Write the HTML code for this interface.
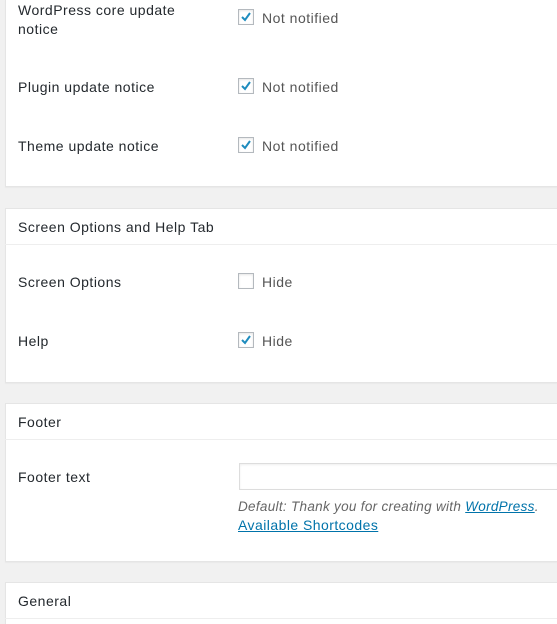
<!DOCTYPE html>
<html><head><style>
html,body{margin:0;width:557px;height:624px;overflow:hidden}
body{background:#f1f1f1;position:relative;font-family:"Liberation Sans",sans-serif;font-size:14px;color:#23282d;letter-spacing:.5px}
.p{position:absolute;left:5px;width:551px;background:#fff;border:1px solid #e5e5e5;border-right:none;box-shadow:0 1px 1px rgba(0,0,0,.04)}
.h{position:absolute;left:5px;width:552px;border-bottom:1px solid #eee}
.t{position:absolute;left:18px;line-height:19px;white-space:nowrap}
.cb{position:absolute;left:238px;width:14px;height:14px;border:1px solid #b4b9be;background:#fff;box-shadow:inset 0 1px 2px rgba(0,0,0,.1)}
.cb svg{position:absolute;left:1px;top:1px}
.l{position:absolute;left:262px;line-height:19px;color:#555}
a{color:#0073aa;text-decoration:underline}
</style></head><body>
<div class="p" style="top:0;height:186px;border-top:none"></div>
<div class="t" style="top:1px">WordPress core update<br>notice</div>
<div class="cb" style="top:9px"><svg width="12" height="12" viewBox="0 0 12 12"><path d="M2 6l3 3 5-7" fill="none" stroke="#1e8cbe" stroke-width="2"/></svg></div>
<div class="l" style="top:9px">Not notified</div>
<div class="t" style="top:78px">Plugin update notice</div>
<div class="cb" style="top:78px"><svg width="12" height="12" viewBox="0 0 12 12"><path d="M2 6l3 3 5-7" fill="none" stroke="#1e8cbe" stroke-width="2"/></svg></div>
<div class="l" style="top:78px">Not notified</div>
<div class="t" style="top:137px">Theme update notice</div>
<div class="cb" style="top:137px"><svg width="12" height="12" viewBox="0 0 12 12"><path d="M2 6l3 3 5-7" fill="none" stroke="#1e8cbe" stroke-width="2"/></svg></div>
<div class="l" style="top:137px">Not notified</div>

<div class="p" style="top:208px;height:173px"></div>
<div class="h" style="top:208px;height:36px"></div>
<div class="t" style="top:218px">Screen Options and Help Tab</div>
<div class="t" style="top:273px">Screen Options</div>
<div class="cb" style="top:273px"></div>
<div class="l" style="top:273px">Hide</div>
<div class="t" style="top:332px">Help</div>
<div class="cb" style="top:332px"><svg width="12" height="12" viewBox="0 0 12 12"><path d="M2 6l3 3 5-7" fill="none" stroke="#1e8cbe" stroke-width="2"/></svg></div>
<div class="l" style="top:332px">Hide</div>

<div class="p" style="top:403px;height:157px"></div>
<div class="h" style="top:403px;height:36px"></div>
<div class="t" style="top:413px">Footer</div>
<div class="t" style="top:468px">Footer text</div>
<div style="position:absolute;left:239px;top:463px;width:318px;height:25px;border:1px solid #ddd;border-right:none;box-shadow:inset 0 1px 2px rgba(0,0,0,.07);background:#fff"></div>
<div style="position:absolute;left:238px;top:497px;line-height:19px;font-size:13.5px;letter-spacing:.3px;color:#666;font-style:italic;white-space:nowrap">Default: Thank you for creating with <a href="#">WordPress</a>.</div>
<div style="position:absolute;left:238px;top:516px;line-height:19px;letter-spacing:.45px;white-space:nowrap"><a href="#">Available Shortcodes</a></div>

<div class="p" style="top:582px;height:41px;border-bottom:none"></div>
<div class="h" style="top:582px;height:36px"></div>
<div class="t" style="top:592px">General</div>
</body></html>
